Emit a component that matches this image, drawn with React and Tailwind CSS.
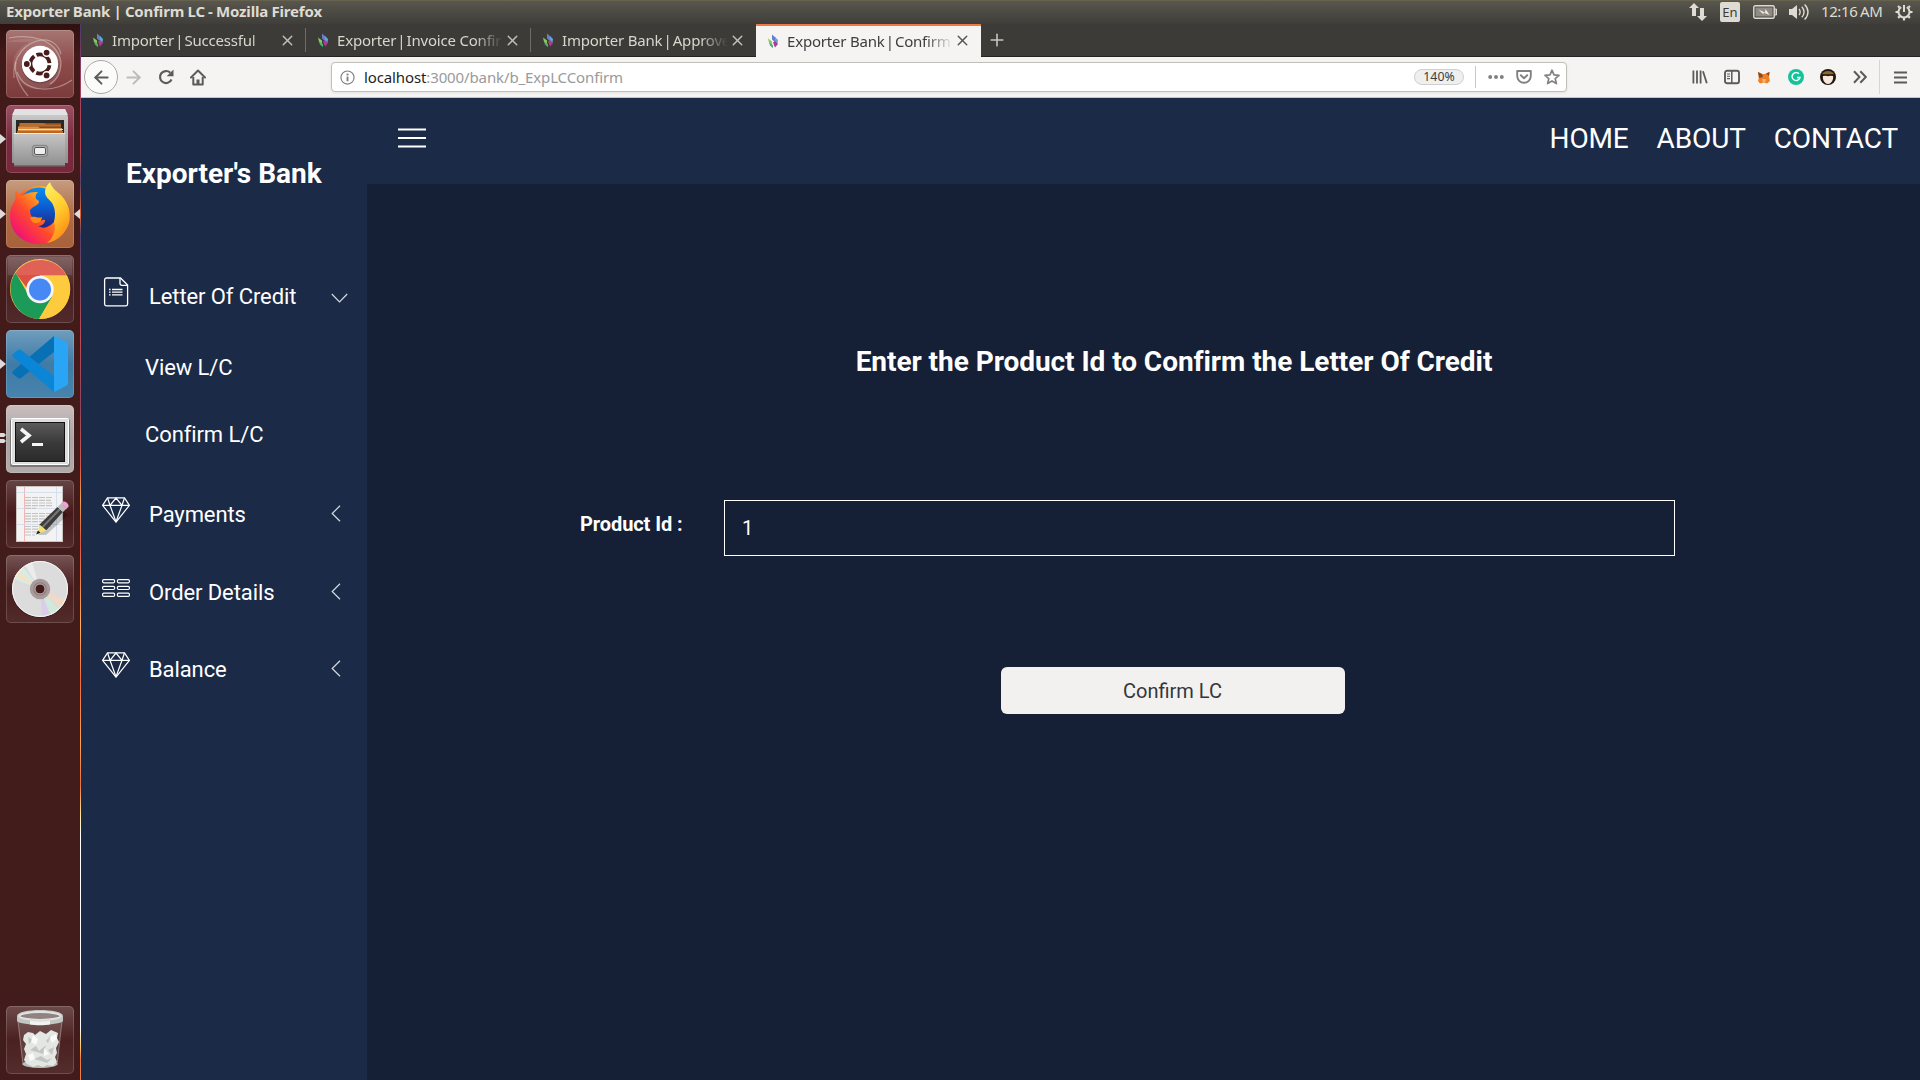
import { ArrowLeft, ArrowRight, X, Plus } from "lucide-react";

const ubuntuFont = "font-['Noto_Sans',sans-serif]";

/* ---------- Launcher ---------- */

function UbuntuIcon() {
  return (
    <svg viewBox="0 0 68 68" className="size-[68px]">
      <g fill="none" stroke="#fff" strokeOpacity=".35" strokeWidth="1.2">
        <path d="M3 8C24 4 50 8 55 32c0 10-4 18-11 22" />
        <path d="M8 48C6 26 20 12 36 10c10-1 17 6 19 14" />
        <path d="M66 50C46 64 18 62 11 42" />
        <path d="M22 66C12 54 8 42 10 32" />
      </g>
      <path d="M0 12C20 6 45 6 54 24c3 14-2 26-10 32C30 64 12 56 9 42 4 30 10 18 24 12z" fill="#fff" opacity=".1" />
      <circle cx="34" cy="35" r="18.5" fill="#000" opacity=".25" />
      <circle cx="34" cy="34" r="18.2" fill="#fff" />
      <circle cx="34" cy="34" r="9.6" fill="none" stroke="#4a1d1c" strokeWidth="3.8" strokeDasharray="17.6 2.5" strokeDashoffset="-1.2" />
      <g fill="#4a1d1c" stroke="#fff" strokeWidth="1.4">
        <circle cx="20.8" cy="34" r="3.6" />
        <circle cx="40.6" cy="22.6" r="3.6" />
        <circle cx="40.6" cy="45.4" r="3.6" />
      </g>
    </svg>
  );
}

function FilesIcon() {
  return (
    <svg viewBox="0 0 68 68" className="size-[68px]">
      <defs>
        <linearGradient id="cabTop" x1="0" y1="0" x2="0" y2="1">
          <stop offset="0" stopColor="#cfcfcf" />
          <stop offset="1" stopColor="#8f8f8f" />
        </linearGradient>
        <linearGradient id="cabFront" x1="0" y1="0" x2="0" y2="1">
          <stop offset="0" stopColor="#c6c6c6" />
          <stop offset="1" stopColor="#8f8f8f" />
        </linearGradient>
      </defs>
      <path d="M9 4h50l3 8v46H6V12z" fill="url(#cabTop)" />
      <path d="M9 4h50l3 6H6z" fill="#e2e2e2" />
      <path d="M10 15h48v20H10z" fill="#2c2624" />
      <path d="M13 18h42v10H13z" fill="#8a4a1e" />
      <path d="M14 18h24l2 1.500h15v2H14z" fill="#b56d30" />
      <path d="M12 21.500h20l2 1.500h22v3H12z" fill="#d98e45" />
      <path d="M12 24h45v1H12z" fill="#f6dcb5" />
      <path d="M11 26h46v3H11z" fill="#c5651c" />
      <path d="M8 28h51v33H8z" fill="url(#cabFront)" />
      <path d="M8 28h51v1H8z" fill="#ededed" />
      <path d="M8 60h51v1.500H8z" fill="#6f6f6f" />
      <rect x="26.500" y="40.500" width="15" height="11" rx="3" fill="#b6b6b6" stroke="#8a8a8a" strokeWidth="1.500" />
      <rect x="28.500" y="42.500" width="11" height="7" rx="1.500" fill="#eee" stroke="#555" />
    </svg>
  );
}

function FirefoxIcon() {
  return (
    <svg viewBox="0 0 68 68" className="size-[68px]">
      <defs>
        <linearGradient id="ffBody" x1=".9" y1=".1" x2=".1" y2=".9">
          <stop offset="0" stopColor="#ffd43a" />
          <stop offset=".25" stopColor="#ff9a1e" />
          <stop offset=".55" stopColor="#ff4a2c" />
          <stop offset=".88" stopColor="#f5196a" />
          <stop offset="1" stopColor="#b21ba9" />
        </linearGradient>
        <linearGradient id="ffGlobe" x1="0" y1="0" x2="0" y2="1">
          <stop offset="0" stopColor="#0a8df0" />
          <stop offset=".5" stopColor="#0b5bd0" />
          <stop offset="1" stopColor="#24207c" />
        </linearGradient>
        <linearGradient id="ffFlame" x1="0" y1="0" x2=".4" y2="1">
          <stop offset="0" stopColor="#fff36a" />
          <stop offset=".55" stopColor="#ffcf2e" />
          <stop offset="1" stopColor="#ff9118" />
        </linearGradient>
      </defs>
      <circle cx="34" cy="35" r="29" fill="url(#ffBody)" />
      <circle cx="33" cy="28" r="20.500" fill="url(#ffGlobe)" />
      <path d="M10 11c2 1 4 4 6 5 4-3 8-4 16-4-2 2-3 4-2 7 2 1 3 2 3 3 0 3-6 4-9 8 0 6 3 10 9 11 3 0 4-2 6-1 0 4-4 6-7 6 8 4 14 1 17-6l6 12c-5 8-12 12-21 12C16 64 4 52 4 36c0-8 3-12 6-16-1-3-1-6 0-9z" fill="url(#ffBody)" />
      <path d="M44 2c2 7 8 10 13 16 6 7 8 16 6 25-3 10-11 18-22 20 8-7 9-14 7-21 2-8 1-14-2-19-3-4-7-6-7-11 0-4 2-7 5-10z" fill="url(#ffFlame)" />
      <path d="M24 38c4-3 8 1 12-1 0 3-2 6-6 6-3 0-5-2-6-5z" fill="#ff8a1c" />
    </svg>
  );
}

function ChromeIcon() {
  return (
    <svg viewBox="0 0 68 68" className="size-[68px]">
      <circle cx="34" cy="34" r="30" fill="#fecb3f" />
      <path d="M9.500 18A30 30 0 0 1 60.500 20.500H34v14H22z" fill="#dd5144" />
      <path d="M9.500 17.500A30 30 0 0 0 33 64L46 42l-12-7-11 6z" fill="#1c9a57" />
      <path d="M34 20.500h27A30 30 0 0 1 33 64L46 42z" fill="#fecb3f" />
      <circle cx="34" cy="34.500" r="13.700" fill="#f3f5fb" />
      <circle cx="34" cy="34.500" r="11" fill="#4688f4" />
      <path d="M2 2h64v18H2z" fill="#fff" opacity=".1" />
    </svg>
  );
}

function CodeIcon() {
  return (
    <svg viewBox="0 0 68 68" className="size-[68px]">
      <path d="M48 6v16L15 48c-1 .800-2 .800-3 0l-5-4c-1-1-1-2 0-3z" fill="#0870b4" />
      <path d="M48 62V46L15 20c-1-.800-2-.800-3 0l-5 4c-1 1-1 2 0 3z" fill="#0b86d6" />
      <path d="M48 6l12 6c1.500.600 2 1.500 2 3v38c0 1.500-.600 2.300-2 3l-12 6z" fill="#2aa5f5" />
    </svg>
  );
}

function TerminalIcon() {
  return (
    <svg viewBox="0 0 68 68" className="size-[68px]">
      <defs>
        <linearGradient id="term" x1="0" y1="0" x2="0" y2="1">
          <stop offset="0" stopColor="#5b5b5b" />
          <stop offset=".5" stopColor="#3b3b3b" />
          <stop offset="1" stopColor="#2a2a2a" />
        </linearGradient>
      </defs>
      <rect x="4" y="14" width="60" height="48" rx="2" fill="#7c7a79" />
      <rect x="5.500" y="13.500" width="57" height="46" rx="1" fill="#dedede" stroke="#fff" />
      <rect x="9.500" y="17.500" width="49" height="39" fill="url(#term)" stroke="#111" />
      <path d="M15 24l8 6.500-8 6.500" fill="none" stroke="#f5f5f5" strokeWidth="3.600" />
      <path d="M26 39.500h11" stroke="#f5f5f5" strokeWidth="3" />
    </svg>
  );
}

function EditorIcon() {
  return (
    <svg viewBox="0 0 68 68" className="size-[68px]">
      <rect x="10.500" y="6.500" width="46" height="55" fill="#f3f3f3" stroke="#c9c4c0" />
      <path d="M18.500 7v54" stroke="#f3b5b5" />
      <path d="M50.500 7v54M11 12.500h45M11 28.500h45M11 44.500h45" stroke="#cfd9ee" strokeWidth=".800" />
      <g stroke="#c4c4c4" strokeWidth="1.200" strokeDasharray="6 1">
        <path d="M19 17.500h28M19 20.300h26M19 23h27M19 25.700h28M19 28.300h11M19 33.500h27M19 36.200h28M19 38.900h27M19 41.600h26M19 46.500h26M19 49.200h18M19 52h14M19 55h10" />
      </g>
      <path d="M58 32l4 3-22 20-8 0z" fill="#000" opacity=".2" />
      <path d="M51.500 27l5.500 5-17 18.500-7-5.500z" fill="#3c3c3c" />
      <path d="M53 28.500l1.500 1.500-17.500 18-1.500-1.300z" fill="#777" />
      <path d="M33.500 44.500l7 6-9 3.500z" fill="#f3e272" />
      <path d="M32 50.500l2.500 2.200-4.500 1.800z" fill="#1c1c1c" />
      <path d="M51.500 27l3.500-3.500 5.500 5L57 32z" fill="#bdbdbd" />
      <path d="M55 23.500c1.500-4 8-1 7.500 3l-2 2.500z" fill="#eba3cf" />
    </svg>
  );
}

function DiscIcon() {
  return (
    <svg viewBox="0 0 68 68" className="size-[68px]">
      <circle cx="34" cy="35" r="28" fill="#000" opacity=".3" />
      <circle cx="34" cy="34" r="28" fill="#dcdcdc" />
      <path d="M34 34 8 24A28 28 0 0 1 17 12z" fill="#d6ece4" />
      <path d="M34 34 9 21A28 28 0 0 1 13 16z" fill="#f3e3c4" />
      <path d="M34 34 19 10.500A28 28 0 0 1 26 7.200z" fill="#ececec" />
      <path d="M34 34 60 44A28 28 0 0 1 54 53z" fill="#efd9c9" />
      <path d="M34 34 53 54.500A28 28 0 0 1 45 60z" fill="#cfe9dc" />
      <path d="M34 34 44 60A28 28 0 0 1 36 62z" fill="#d9cdea" />
      <circle cx="34" cy="34" r="27.500" fill="none" stroke="#f7f7f7" />
      <circle cx="34" cy="34" r="8.500" fill="#8f7d7d" stroke="#a89a9a" strokeWidth="3.500" />
      <circle cx="34" cy="34" r="5" fill="#431b1b" stroke="#c4b9b9" />
    </svg>
  );
}

function TrashIcon() {
  return (
    <svg viewBox="0 0 68 68" className="size-[68px]">
      <path d="M12 13l5 46c6 4 28 4 34 0l5-46z" fill="#fff" opacity=".13" />
      <path d="M12 15l5 44M56 15l-5 44" stroke="#fff" strokeOpacity=".35" />
      <ellipse cx="34" cy="58" rx="17.500" ry="4" fill="#b9beb9" />
      <path d="M18 29l4-3 5 1 2 2 5-4 6 3 5-4 7 3-1 5 2 4-3 6 1 5-2 4 2 5-4 4-6-1-4 2-5-2-5 2-6-3-3-4 2-6-2-5 2-5-3-4z" fill="#e4e6e4" />
      <path d="M22 31l5 3-4 4zM35 30l5 5 5-6-3 8zM24 44l6-4 3 5 7-6-3 9-6-2zM42 44l6-3-2 8zM28 53l7-3 6 4 5-2-5 5-6-2z" fill="#c2c6c3" />
      <path d="M27 29l5 4-2 6-5-3zM44 31l6-3 1 5-5 4zM22 49l5-2 2 6-5 2zM38 42l5 6-5 2z" fill="#fafafa" />
      <path d="M11 10c0-8 46-8 46 0v5c-4 5-42 5-46 0z" fill="#c3c7c3" />
      <path d="M24 14.500c6 1.200 14 1.200 20 0v4c-6 1-14 1-20 0z" fill="#f2f4f2" />
      <ellipse cx="34" cy="10" rx="20.500" ry="4" fill="#8f8280" stroke="#dfe2df" strokeWidth="2" />
    </svg>
  );
}

const launcher = [
  { Icon: UbuntuIcon, bg: "bg-linear-to-b from-[#a67673] via-[#8d4a49] to-[#7b3b3c]" },
  { Icon: FilesIcon, bg: "bg-linear-to-b from-[#9b5064] via-[#7a2a3e] to-[#78283c]", left: 1 },
  { Icon: FirefoxIcon, bg: "bg-linear-to-b from-[#c69d80] via-[#b06c45] to-[#a8613b]", left: 1, right: true },
  { Icon: ChromeIcon, bg: "bg-linear-to-b from-[#755455] via-[#4a2022] to-[#512a2b]" },
  { Icon: CodeIcon, bg: "bg-linear-to-b from-[#6f9dbd] via-[#3f7ba6] to-[#4683ad]", left: 1 },
  { Icon: TerminalIcon, bg: "bg-linear-to-b from-[#c9bebe] via-[#aaa4a4] to-[#b1abab]", left: 2 },
  { Icon: EditorIcon, bg: "bg-linear-to-b from-[#664445] via-[#47191a] to-[#522b2b]" },
  { Icon: DiscIcon, bg: "bg-linear-to-b from-[#755455] via-[#481d1e] to-[#522b2b]" },
];

function Tile({ Icon, bg, left, right }) {
  return (
    <div className="relative flex h-[68px] w-20 shrink-0 justify-center">
      {left === 1 && (
        <svg viewBox="0 0 6 10" className="absolute top-[29px] left-0 h-[10px] w-[6px]">
          <path d="M0 0l6 5-6 5z" fill="#dedad9" />
        </svg>
      )}
      {left === 2 && (
        <svg viewBox="0 0 6 10" className="absolute top-[28px] left-0 h-[10px] w-[6px]">
          <path d="M0 0h4l2 2-2 2H0zM0 6h4l2 2-2 2H0z" fill="#dedad9" />
        </svg>
      )}
      {right && (
        <svg viewBox="0 0 6 10" className="absolute top-[29px] right-0 h-[10px] w-[6px]">
          <path d="M6 0L0 5l6 5z" fill="#dedad9" />
        </svg>
      )}
      <div className={`size-[68px] overflow-hidden rounded-[5px] shadow-[inset_0_0_0_1px_rgba(255,255,255,0.16)] ${bg}`}>
        <Icon />
      </div>
    </div>
  );
}

function Launcher() {
  return (
    <div className="flex w-20 shrink-0 flex-col bg-linear-to-b from-[#2f1110] via-[#421a1a] via-3% to-[#421c1c] pt-[6px] pb-[6px]">
      <div className="flex flex-col gap-[7px]">
        {launcher.map((t, i) => (
          <Tile key={i} {...t} />
        ))}
      </div>
      <div className="mt-auto">
        <Tile Icon={TrashIcon} bg="bg-linear-to-b from-[#6d4b4b] via-[#4b2020] to-[#532d2d]" />
      </div>
    </div>
  );
}

/* ---------- Top panel ---------- */

function TopPanel() {
  return (
    <div className={`flex h-6 shrink-0 items-center justify-between border-t border-[#65624f] bg-linear-to-b from-[#58564d] to-[#3f3e3a] pr-[7px] pl-[6px] text-[15px] leading-[20px] text-[#dfdbd2] ${ubuntuFont}`}>
      <div className="pb-[3px] font-bold tracking-[-0.15px] [word-spacing:-0.5px]">Exporter Bank | Confirm LC - Mozilla Firefox</div>
      <div className="flex items-center pb-px">
        <svg viewBox="0 0 18 18" className="h-[18px] w-[18px]" fill="#dfdbd2">
          <path d="M5 0l5 5H7v8H3V5H0zM13 18l-5-5h3V5h4v8h3z" />
        </svg>
        <div className="ml-[13px] flex h-5 w-5 items-center justify-center rounded-[2px] bg-[#dfdbd2] text-[13px] leading-none text-[#3c3b37]">En</div>
        <svg viewBox="0 0 25 14" className="ml-[13px] h-[14px] w-[25px]">
          <rect x=".8" y=".8" width="20.400" height="12.400" rx="1.500" fill="none" stroke="#dfdbd2" strokeWidth="1.400" />
          <rect x="2.500" y="2.500" width="17" height="9" fill="#8d8b84" />
          <path d="M22 4h1.500v6H22z" fill="none" stroke="#dfdbd2" />
          <path d="M5.500 4.500L12 7.500l.500-3.500 4 6-6-2.500v2z" fill="#efebe3" />
        </svg>
        <svg viewBox="0 0 20 18" className="ml-[11px] h-[18px] w-5">
          <path d="M0 6h3l5-4v14l-5-4H0z" fill="#dfdbd2" />
          <path d="M10 6c1.500 1.500 1.500 4.500 0 6M12.800 3.800c3 3 3 7.400 0 10.400M15.600 1.500c4.500 4.500 4.500 10.500 0 15" fill="none" stroke="#dfdbd2" strokeWidth="1.400" />
        </svg>
        <div className="ml-[12px] w-[62px] pb-[2px] whitespace-nowrap tracking-[-0.4px] [word-spacing:-0.8px]">12:16 AM</div>
        <svg viewBox="0 0 18 18" className="ml-[12px] h-[18px] w-[18px]" fill="none" stroke="#dfdbd2">
          <path d="M6.200 4.200A5.500 5.500 0 1 0 11.800 4.200" strokeWidth="2" />
          <path d="M9 2v7" strokeWidth="2" />
          <path d="M3.300 9H.5M17.500 9h-2.800M9 17.500v-2.800M4.800 13.200l-1.700 1.700M13.200 13.200l1.700 1.700M4.500 4.500L3 3M13.500 4.500L15 3" strokeWidth="2.200" />
        </svg>
      </div>
    </div>
  );
}

/* ---------- Browser chrome ---------- */

function Favicon() {
  return (
    <svg viewBox="0 0 12 16" className="-ml-px h-4 w-3 shrink-0">
      <path d="M5 1.500l4 3.500v5L5 6.500z" fill="#6a7bd0" />
      <path d="M8 4l3 3-.500 4L8 9z" fill="#58a9dc" />
      <path d="M1 5.500l4 3v4L2 9.800z" fill="#8bcb52" />
      <path d="M2 9.500l4 2.500v3.200L3 12.500z" fill="#4bb07c" />
      <path d="M6 9.500L8 8l3 3-3 3.500z" fill="#b4388f" />
    </svg>
  );
}

const tabs = [
  ["Importer", "Successful"],
  ["Exporter", "Invoice Confir"],
  ["Importer Bank", "Approve"],
  ["Exporter Bank", "Confirm"],
];

function Tab({ label, active, divider }) {
  return (
    <div
      className={
        active
          ? "flex h-full w-[225px] shrink-0 items-center border-t-2 border-[#f07746] bg-[#f5f4f2] pb-[2px] pl-3 text-[#3d3d3d]"
          : "flex h-full w-[225px] shrink-0 items-center border-b border-[#252422] pl-3 text-[#d9d6cc]"
      }
    >
      <Favicon />
      <div className="ml-2 w-[165px] shrink-0 whitespace-nowrap tracking-[-0.2px] [mask-image:linear-gradient(to_right,#000_138px,transparent_166px)]">
        {label[0]} <span className="-mx-[2.6px]">|</span> {label[1]}
      </div>
      <X className={active ? "ml-[2px] size-[17px] shrink-0 text-[#555]" : "ml-[2px] size-[17px] shrink-0 text-[#c4c1b8]"} strokeWidth={2} />
      {divider && <div className="ml-auto h-6 w-px bg-[#6d6c67]" />}
    </div>
  );
}

function TabBar() {
  return (
    <div className={`flex h-[33px] shrink-0 bg-[#3c3b37] text-[15px] leading-5 ${ubuntuFont}`}>
      {tabs.map((t, i) => (
        <Tab key={i} label={t} active={i === 3} divider={i < 2} />
      ))}
      <div className="flex flex-1 items-center border-b border-[#252422] pl-[6px] text-[#c9c6bd]">
        <Plus className="size-5" strokeWidth={1.900} />
      </div>
    </div>
  );
}

function Toolbar() {
  return (
    <div className={`flex h-[41px] shrink-0 items-center border-b border-[#c5c2bf] bg-[#f5f4f2] text-[#5b5b5b] ${ubuntuFont}`}>
      <div className="ml-[3px] flex size-[34px] items-center justify-center rounded-full border border-[#aaa] bg-[#fbfbfa]">
        <ArrowLeft className="size-[21px]" strokeWidth={2.200} />
      </div>
      <ArrowRight className="ml-[5px] size-[21px] text-[#bcbbb9]" strokeWidth={2.200} />
      <svg viewBox="0 0 16 16" className="ml-[14px] size-4" fill="none" stroke="currentColor" strokeWidth="2.200">
        <path d="M13.500 10.500A6 6 0 1 1 12.300 3.800" />
        <path d="M15.500 .5v6.800H8.700z" fill="currentColor" stroke="none" />
      </svg>
      <svg viewBox="0 0 16 17" className="ml-[16px] h-[17px] w-4" fill="none" stroke="currentColor" strokeWidth="2" strokeLinejoin="round">
        <path d="M1 8.500L8 1.500l7 7" strokeLinecap="round" />
        <path d="M3.300 8v7.500h9.400V8" />
        <path d="M6.500 15.500v-5h3v5z" fill="currentColor" stroke="none" />
      </svg>
      <div className="ml-[125px] flex h-[30px] w-[1236px] items-center rounded-[4px] border border-[#c2bfbb] bg-white pl-2 pr-[6px] shadow-[0_1px_3px_rgba(0,0,0,0.08)]">
        <svg viewBox="0 0 16 16" className="size-[15px]" fill="none" stroke="#7d7d7d" strokeWidth="1.200">
          <circle cx="8" cy="8" r="7" />
          <path d="M8 7v5" strokeWidth="2" />
          <path d="M8 3.800v2" strokeWidth="2" />
        </svg>
        <div className="ml-[9px] text-[15px] leading-5 tracking-[-0.120px] text-[#9a9a9a]">
          <span className="text-[#1f1f1f]">localhost</span>:3000/bank/b_ExpLCConfirm
        </div>
        <div className="ml-auto flex h-4 w-[50px] items-center justify-center rounded-full border border-[#cfcfcf] bg-[#efefef] pt-px text-[12.300px] leading-none text-[#3c3c3c]">140%</div>
        <div className="ml-[11px] h-[22px] w-px bg-[#c9c9c9]" />
        <svg viewBox="0 0 16 16" className="ml-3 size-4" fill="#818181">
          <circle cx="2.200" cy="8" r="2" />
          <circle cx="8" cy="8" r="2" />
          <circle cx="13.800" cy="8" r="2" />
        </svg>
        <svg viewBox="0 0 16 16" className="ml-3 size-4" fill="none" stroke="#818181" strokeWidth="1.900" strokeLinecap="round" strokeLinejoin="round">
          <path d="M1.200 2h13.600v5a6.800 6.800 0 0 1-13.600 0z" />
          <path d="M4.800 6.200L8 9.300l3.200-3.100" />
        </svg>
        <svg viewBox="0 0 16 16" className="ml-3 size-4" fill="none" stroke="#818181" strokeWidth="1.700" strokeLinejoin="round">
          <path d="M8 1.200l2 4.600 5 .500-3.800 3.300 1.200 5L8 12l-4.400 2.600 1.200-5L1 6.300l5-.500z" />
        </svg>
      </div>
      <div className="ml-auto flex items-center">
        <svg viewBox="0 0 16 16" className="size-4" fill="none" stroke="currentColor" strokeWidth="1.800">
          <path d="M1.400 1.500v13M5 1.500v13M8.600 1.500v13M11 2.300l3.800 12" />
        </svg>
        <svg viewBox="0 0 16 16" className="ml-4 size-4" fill="none" stroke="currentColor">
          <rect x="1" y="1.800" width="14" height="12.400" rx="2" strokeWidth="1.900" />
          <path d="M7.800 2v12" strokeWidth="1.500" />
          <path d="M3 5h3M3 7.300h3M3 9.600h3" strokeWidth="1.100" />
        </svg>
        <svg viewBox="0 0 12 13" className="ml-[18px] h-[13px] w-3">
          <path d="M0 1l4 2h3l4.500-2-.500 5 1 4-3 2.500-3-1-4 1L0 10l1-4z" fill="#ee8128" />
          <path d="M0 1l4 2 1 3-4 1zM8 2.500l3.500-1.500-.500 4z" fill="#8a4b22" />
          <path d="M4 8h4l-1 4H5z" fill="#f8b168" />
        </svg>
        <div className="ml-[18px] flex size-4 items-center justify-center rounded-full bg-[#15c39a]">
          <svg viewBox="0 0 10 10" className="size-[10px]" fill="none" stroke="#fff" strokeWidth="1.400">
            <path d="M8 1.800A4 4 0 1 0 9 5.500H6" />
          </svg>
        </div>
        <svg viewBox="0 0 16 16" className="ml-[16px] size-4">
          <circle cx="8" cy="8" r="8" fill="#20160f" />
          <path d="M2 5C4 1 12 1 14 5l-3 1H5z" fill="#8a6a2c" />
          <path d="M3 6.500h10c.800 4-1.500 8.500-5 8.500s-5.800-4.500-5-8.500z" fill="#f8e7dc" />
          <path d="M3 5.300h10v1.700l-2.500-.600L8 7.200l-2.500-.800L3 7z" fill="#20160f" />
        </svg>
        <svg viewBox="0 0 14 14" className="ml-[17px] size-[14px]" fill="none" stroke="currentColor" strokeWidth="2">
          <path d="M1 1.200L6.500 7 1 12.800M7.300 1.200L12.800 7l-5.500 5.800" />
        </svg>
        <div className="ml-3 h-[34px] w-px bg-[#d7d5d2]" />
        <svg viewBox="0 0 13 13" className="mr-[13px] ml-[14px] size-[13px]" stroke="currentColor" strokeWidth="2">
          <path d="M0 1.500h13M0 6.500h13M0 11.500h13" />
        </svg>
      </div>
    </div>
  );
}

/* ---------- Page ---------- */

function DocIcon() {
  return (
    <svg viewBox="0 0 28 30" className="h-[30px] w-7" fill="none" stroke="#fff" strokeWidth="1.300">
      <path d="M18.500 1H4.500A2 2 0 0 0 2.600 3v24a2 2 0 0 0 2 1.900h19a2 2 0 0 0 2-1.900V8z" />
      <path d="M18 1v5.500a1.800 1.800 0 0 0 1.800 1.800h5.500" />
      <path d="M10 12.500h10.500M10 15.200h10.500M10 17.900h10.500" />
      <path d="M7 12.500h1.600M7 15.200h1.600M7 17.900h1.600" />
    </svg>
  );
}

function DiamondIcon() {
  return (
    <svg viewBox="0 0 28 26" className="mb-[2px] h-[26px] w-7" fill="none" stroke="#fff" strokeWidth="1.200" strokeLinejoin="round">
      <path d="M5.500.8h17L27.400 8.300 14 25.200.6 8.300z" />
      <path d="M.6 8.300h26.800M5.500.8L8 8.300 14 1l6 7.300L22.500.8M8 8.300l6 16.500 6-16.500" />
    </svg>
  );
}

function ListIcon() {
  return (
    <svg viewBox="0 0 28 18" className="h-[18px] w-7" fill="none" stroke="#fff" strokeWidth="1.200">
      {[0.6, 7.3, 14.2].map((y) => (
        <g key={y}>
          <rect x=".6" y={y} width="12" height="3.200" rx="1.200" />
          <rect x="15.400" y={y} width="12" height="3.200" rx="1.200" />
        </g>
      ))}
    </svg>
  );
}

function NavItem({ Icon, label, open, className }) {
  return (
    <div className={`flex items-center pl-[21px] ${className}`}>
      <div className="flex w-7 shrink-0 justify-center pb-[9px]">
        <Icon />
      </div>
      <div className="ml-[19px] w-[182px]">{label}</div>
      {open ? (
        <svg viewBox="0 0 17 10" className="mt-[3px] h-[10px] w-[17px]" fill="none" stroke="#d5d9e0" strokeWidth="1.200">
          <path d="M.8 1l7.700 7.800L16.200 1" />
        </svg>
      ) : (
        <svg viewBox="0 0 10 17" className="mb-[3px] h-[17px] w-[10px]" fill="none" stroke="#d5d9e0" strokeWidth="1.200">
          <path d="M9 .8L1.200 8.500 9 16.200" />
        </svg>
      )}
    </div>
  );
}

function Sidebar() {
  return (
    <aside className="flex w-[286px] shrink-0 flex-col bg-[#1b2a47]">
      <h1 className="mt-[62px] pl-[45px] text-[28px] leading-7 font-bold">Exporter's Bank</h1>
      <nav className="mt-[71px] flex flex-col text-[22px] leading-7 tracking-[-0.1px]">
        <NavItem Icon={DocIcon} label="Letter Of Credit" open className="h-[75px]" />
        <div className="flex flex-col pb-2 pl-[64px]">
          <div className="flex h-[67px] items-center">View L/C</div>
          <div className="flex h-[67px] items-center">Confirm L/C</div>
        </div>
        <NavItem Icon={DiamondIcon} label="Payments" className="h-[78px]" />
        <NavItem Icon={ListIcon} label="Order Details" className="h-[77px]" />
        <NavItem Icon={DiamondIcon} label="Balance" className="h-[78px]" />
      </nav>
    </aside>
  );
}

function Header() {
  return (
    <header className="flex h-[86px] shrink-0 items-center justify-between bg-[#1b2a47] pr-[22px] pb-[6px] pl-[31px]">
      <svg viewBox="0 0 28 20" className="h-5 w-7" stroke="#fff" strokeWidth="2">
        <path d="M0 1.500h28M0 10h28M0 18.500h28" />
      </svg>
      <nav className="flex gap-7 pt-[2px] text-[28px] leading-8 tracking-[-0.15px]">
        <a>HOME</a>
        <a>ABOUT</a>
        <a>CONTACT</a>
      </nav>
    </header>
  );
}

function ConfirmForm() {
  return (
    <main className="flex flex-1 flex-col bg-[#151f36]">
      <div className="ml-[212px] flex w-[1189px] flex-col pt-[162px]">
        <h2 className="pl-px text-center text-[28px] leading-8 font-bold tracking-[-0.05px]">Enter the Product Id to Confirm the Letter Of Credit</h2>
        <div className="mt-[122px] flex items-center text-[20px] leading-6">
          <label className="w-[145px] pb-2 pl-px font-bold tracking-[-0.08px]">Product Id :</label>
          <input readOnly value="1" className="h-14 w-[951px] border border-white bg-transparent px-[17px] outline-none" />
        </div>
        <button className="mt-[111px] mr-[2px] h-[47px] w-[344px] self-center rounded-[6px] bg-[#f2f1ef] text-[20px] leading-6 text-[#33373d]">Confirm LC</button>
      </div>
    </main>
  );
}

export default function App() {
  return (
    <div className="flex h-[1080px] w-[1920px] flex-col overflow-hidden bg-[#151f36]">
      <TopPanel />
      <div className="flex min-h-0 flex-1">
        <Launcher />
        <div className="w-px shrink-0 bg-[linear-gradient(to_bottom,#4a3a6a_0%,#9a3f63_5%,#c2484f_12%,#5a4468_15%,#e8663a_18%,#50426e_20%,#c04a55_30%,#8d4462_36%,#d8574a_42%,#f0a04a_45%,#dc5548_49%,#ffb05a_57%,#f4683c_62%,#ffa050_68%,#f0703c_72%,#ffe9a0_75%,#fff_77%,#fff_95%,#ffc25a_97%,#f07a3a_98%)]" />
        <div className="flex min-w-0 flex-1 flex-col">
          <TabBar />
          <Toolbar />
          <div className="flex min-h-0 flex-1 font-[Roboto,sans-serif] text-white">
            <Sidebar />
            <div className="flex min-w-0 flex-1 flex-col">
              <Header />
              <ConfirmForm />
            </div>
          </div>
        </div>
      </div>
    </div>
  );
}
